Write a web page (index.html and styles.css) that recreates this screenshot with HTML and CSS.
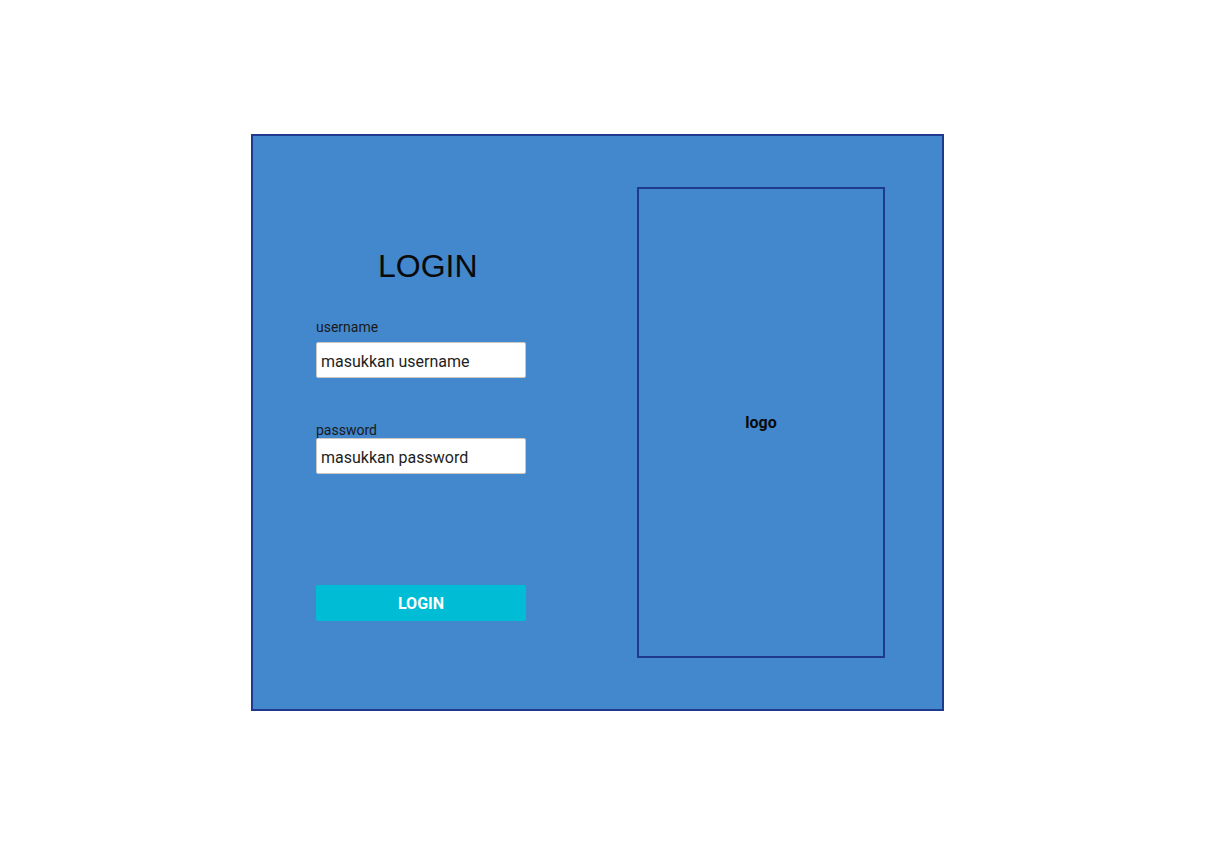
FILE: index.html
```html
<!DOCTYPE html>
<html>
<head>
<meta charset="utf-8">
<link rel="stylesheet" href="styles.css">
</head>
<body>
<div class="page">
  <div class="card">
    <div class="form">
      <h1 class="title">LOGIN</h1>
      <label class="label label-user">username</label>
      <div class="input">masukkan username</div>
      <label class="label label-pass">password</label>
      <div class="input">masukkan password</div>
      <div class="button">LOGIN</div>
    </div>
    <div class="logo-box">
      <span class="logo">logo</span>
    </div>
  </div>
</div>
</body>
</html>
```

FILE: styles.css
```css
html, body {
  margin: 0;
  padding: 0;
  background: #ffffff;
}
.page {
  padding: 134px 0 0 251px;
}
.card {
  width: 693px;
  height: 577px;
  box-sizing: border-box;
  border: 2px solid #1f3a8c;
  background: #4387cc;
  display: flex;
  padding: 51px 57px 51px 63px;
}
.form {
  flex: 1;
  display: flex;
  flex-direction: column;
}
.title {
  margin: 61px 0 0 0;
  padding-left: 62px;
  font-family: "Liberation Sans", Arial, sans-serif;
  font-weight: normal;
  font-size: 32px;
  line-height: 36px;
  color: #0a0a0a;
}
.label {
  font-family: Roboto, "Liberation Sans", sans-serif;
  font-size: 14px;
  line-height: 16px;
  color: #1a1a1a;
}
.label-user {
  margin-top: 35px;
  margin-bottom: 7px;
}
.label-pass {
  margin-top: 44px;
}
.input {
  width: 210px;
  height: 36px;
  box-sizing: border-box;
  background: #ffffff;
  border: 1px solid #c8c8c8;
  border-radius: 2px;
  padding: 2px 4px 0;
  font-family: Roboto, "Liberation Sans", sans-serif;
  font-size: 16px;
  line-height: 34px;
  color: #1e1e1e;
}
.button {
  margin-top: 111px;
  width: 210px;
  height: 36px;
  background: #00bcd4;
  border-radius: 2px;
  color: #ffffff;
  font-family: Roboto, "Liberation Sans", sans-serif;
  font-weight: bold;
  font-size: 16px;
  line-height: 37px;
  text-align: center;
}
.logo-box {
  width: 248px;
  box-sizing: border-box;
  border: 2px solid #1f3a8c;
  display: flex;
  align-items: center;
  justify-content: center;
}
.logo {
  font-family: Roboto, "Liberation Sans", sans-serif;
  font-weight: bold;
  font-size: 16px;
  color: #0a0a0a;
}
```
